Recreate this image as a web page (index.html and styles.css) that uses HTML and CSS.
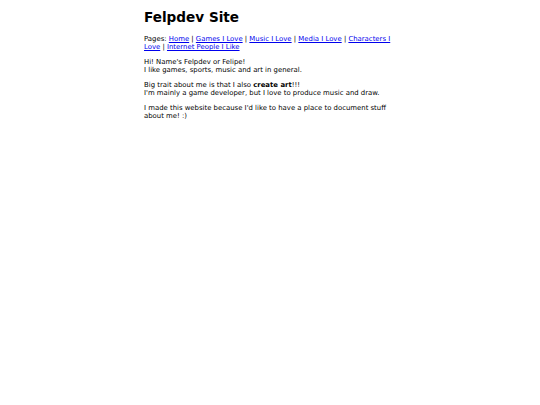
FILE: index.html
```html
<!DOCTYPE html>
<html>
<head>
<meta charset="utf-8">
<link rel="stylesheet" href="styles.css">
</head>
<body>
<div class="page">
<h1 class="title">Felpdev Site</h1>
<p class="nav">Pages: <a href="#">Home</a> | <a href="#">Games I Love</a> | <a href="#">Music I Love</a> | <a href="#">Media I Love</a> | <a href="#">Characters I Love</a> | <a href="#">Internet People I Like</a></p>
<p>Hi! Name's Felpdev or Felipe!<br>I like games, sports, music and art in general.</p>
<p>Big trait about me is that I also <b>create art</b>!!!<br>I'm mainly a game developer, but I love to produce music and draw.</p>
<p>I made this website because I'd like to have a place to document stuff about me! :)</p>
</div>
</body>
</html>
```
FILE: styles.css
```css
body {
  margin: 0;
  background: #fff;
  color: #000;
  font-family: "DejaVu Sans", Verdana, sans-serif;
  font-size: 6.9px;
  line-height: 8px;
}
.page {
  width: 252px;
  margin: 0 auto;
  padding-top: 9px;
}
.title {
  font-size: 13.6px;
  line-height: 16px;
  margin: 0 0 10px;
}
p {
  margin: 0 0 7px;
}
a {
  color: #0000ee;
}
```
